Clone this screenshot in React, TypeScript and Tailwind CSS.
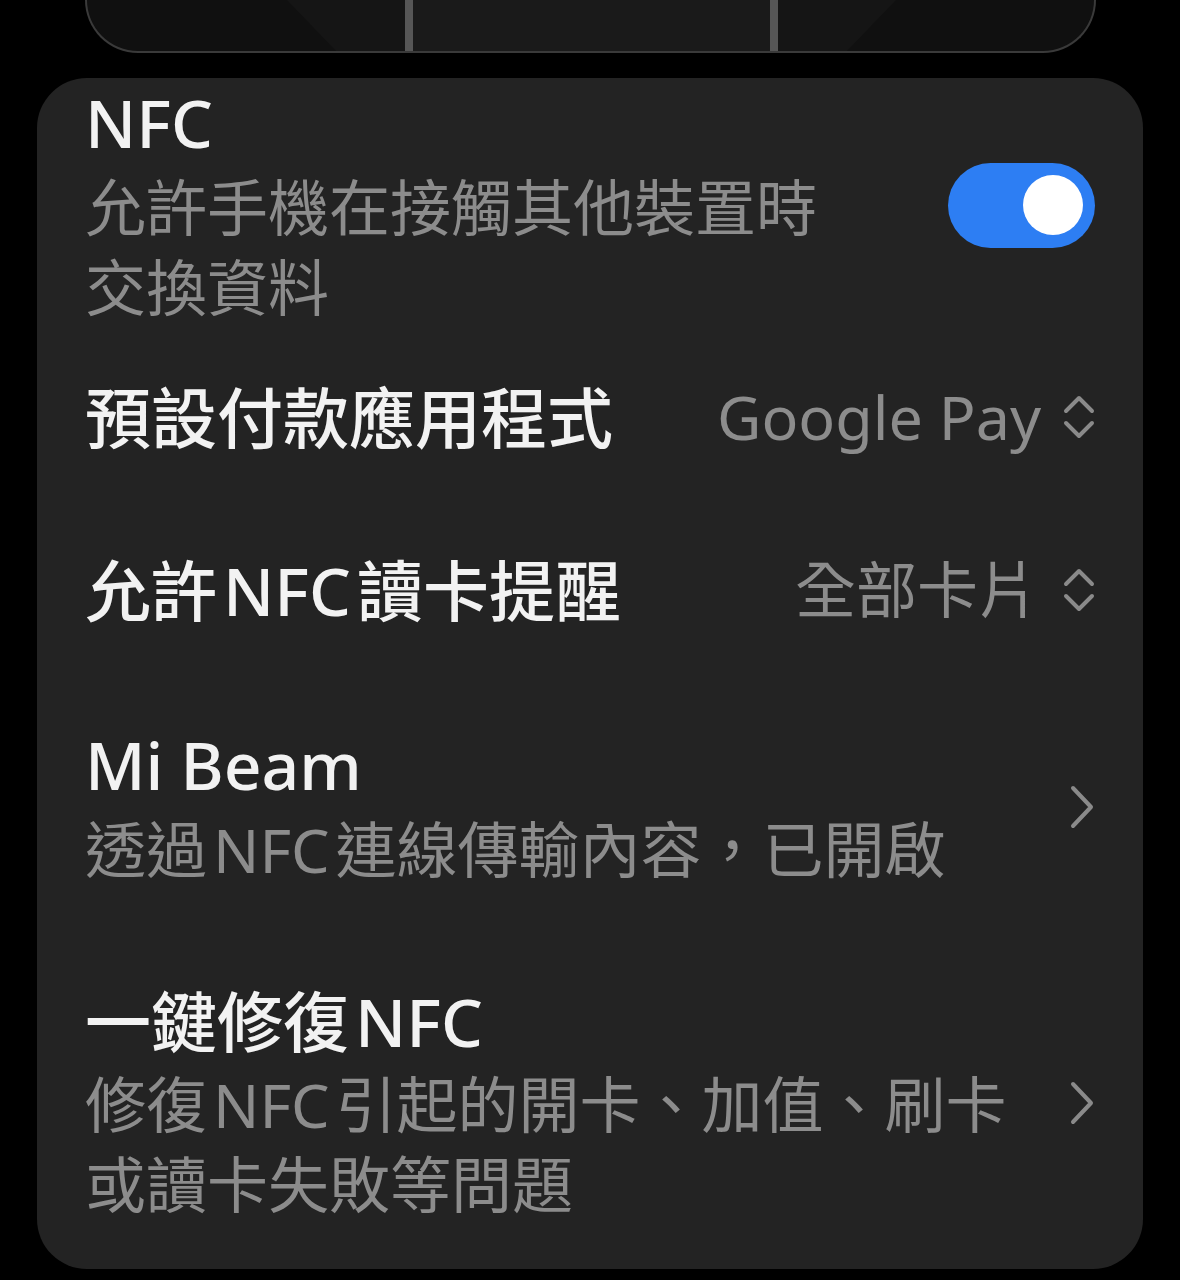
import React from "react";

const font = "font-['Noto_Sans','Noto_Sans_CJK_TC',sans-serif]";

function Lat({ children }: { children: React.ReactNode }) {
  return <span className="mx-[6px]">{children}</span>;
}

function UpDown() {
  return (
    <svg width="32" height="50" viewBox="0 0 32 50" fill="none" className="shrink-0">
      <path d="M3 19 L16 6 L29 19" stroke="#8a8a8a" strokeWidth="4" strokeLinecap="round" strokeLinejoin="round" />
      <path d="M3 31 L16 44 L29 31" stroke="#8a8a8a" strokeWidth="4" strokeLinecap="round" strokeLinejoin="round" />
    </svg>
  );
}

function ChevronRight() {
  return (
    <svg width="26" height="44" viewBox="0 0 26 44" fill="none" className="shrink-0">
      <path d="M4 3 L22 22 L4 41" stroke="#8a8a8a" strokeWidth="4" strokeLinecap="round" strokeLinejoin="round" />
    </svg>
  );
}

function Toggle() {
  return (
    <div className="w-[147px] h-[85px] rounded-full bg-[#2d7ef3] flex items-center justify-end pr-[12px] shrink-0">
      <div className="w-[60px] h-[60px] rounded-full bg-white" />
    </div>
  );
}

export default function App() {
  return (
    <div className={`w-[1180px] h-[1280px] bg-black overflow-hidden ${font}`}>
      {/* phone illustration bottom */}
      <div className="ml-[85px] w-[1011px] h-[53px] rounded-b-[56px] border-x-2 border-b-2 border-[#3a3a3a] bg-[#101010] overflow-hidden">
        <svg width="1011" height="53" viewBox="0 0 1011 53" className="block">
          <polygon points="200,0 318,0 318,53 251,53" fill="#151515" />
          <polygon points="689,0 809,0 758,53 689,53" fill="#151515" />
          <rect x="318" y="0" width="371" height="53" fill="#1a1a1a" />
          <rect x="318" y="0" width="8" height="51" fill="#565656" />
          <rect x="683" y="0" width="8" height="51" fill="#565656" />
        </svg>
      </div>

      {/* NFC settings card */}
      <div className="mt-[25px] ml-[37px] w-[1106px] h-[1191px] rounded-[50px] bg-[#232323] pt-[4px] pl-[48px] pr-[48px] flex flex-col">
        {/* NFC */}
        <div className="flex items-center justify-between">
          <div className="max-w-[760px]">
            <div className="text-[66px] leading-[80px] font-medium text-[#f2f2f2]">NFC</div>
            <div className="mt-[6px] text-[61px] leading-[80px] text-[#8c8c8c]">允許手機在接觸其他裝置時交換資料</div>
          </div>
          <Toggle />
        </div>

        {/* default payment app */}
        <div className="h-[178px] flex items-center justify-between">
          <div className="text-[66px] leading-[80px] font-medium text-[#f2f2f2]">預設付款應用程式</div>
          <div className="flex items-center gap-[22px]">
            <span className="text-[61px] leading-[80px] text-[#8c8c8c]">Google Pay</span>
            <UpDown />
          </div>
        </div>

        {/* card reading reminder */}
        <div className="h-[168px] flex items-center justify-between">
          <div className="text-[66px] leading-[80px] font-medium text-[#f2f2f2]">
            允許<Lat>NFC</Lat>讀卡提醒
          </div>
          <div className="flex items-center gap-[24px]">
            <span className="text-[61px] leading-[80px] text-[#8c8c8c]">全部卡片</span>
            <UpDown />
          </div>
        </div>

        {/* Mi Beam */}
        <div className="pt-[50px] flex items-center justify-between">
          <div>
            <div className="text-[66px] leading-[80px] font-medium text-[#f2f2f2]">Mi Beam</div>
            <div className="mt-[6px] text-[61px] leading-[80px] text-[#8c8c8c]">
              透過<Lat>NFC</Lat>連線傳輸內容，已開啟
            </div>
          </div>
          <ChevronRight />
        </div>

        {/* repair NFC */}
        <div className="pt-[91px] pb-[44px] flex items-center justify-between">
          <div>
            <div className="text-[66px] leading-[80px] font-medium text-[#f2f2f2]">
              一鍵修復<Lat>NFC</Lat>
            </div>
            <div className="mt-[4px] text-[61px] leading-[80px] text-[#8c8c8c]">
              <div>
                修復<Lat>NFC</Lat>引起的開卡、加值、刷卡
              </div>
              <div>或讀卡失敗等問題</div>
            </div>
          </div>
          <ChevronRight />
        </div>
      </div>
    </div>
  );
}
